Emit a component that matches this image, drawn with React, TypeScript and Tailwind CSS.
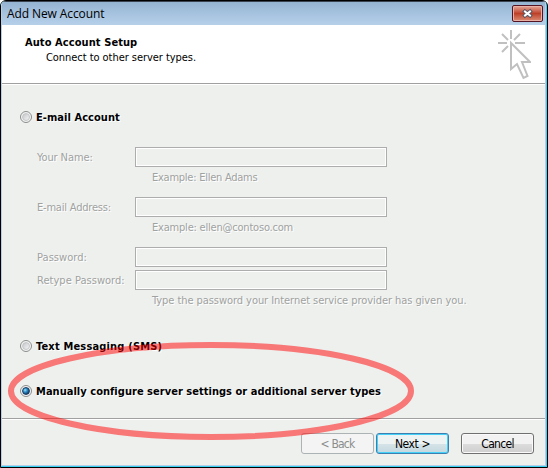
import type { ReactNode } from "react";

const Radio = ({ checked = false }: { checked?: boolean }) => (
  <span className="flex size-3 shrink-0 items-center justify-center rounded-full border border-[#8b8d8d] bg-[#f4f4f4]">
    <span
      className={
        checked
          ? "size-2 rounded-full border border-[#193c60] bg-[radial-gradient(circle_at_35%_35%,#9ee4fb_0%,#2f8fc9_35%,#0b3765_80%)]"
          : "size-2 rounded-full border border-[#c3c6c8] bg-linear-to-br from-[#c5c8ca] to-[#f4f4f4]"
      }
    />
  </span>
);

const Option = ({ label, spacing, checked }: { label: string; spacing: string; checked?: boolean }) => (
  <label className="flex h-4 items-center gap-1 pl-[18px]">
    <Radio checked={checked} />
    <span className={`pt-0.5 font-bold text-black ${spacing}`}>{label}</span>
  </label>
);

const Field = ({ label, spacing }: { label: string; spacing: string }) => (
  <div className="flex h-5 items-center pl-[35px]">
    <span className={`w-[98px] pt-0.5 ${spacing}`}>{label}</span>
    <span className="h-5 w-[252px] border border-[#acadac] bg-[#eef0ee] shadow-[inset_0_0_0_1px_#fff]" />
  </div>
);

const Hint = ({ children, spacing }: { children: ReactNode; spacing: string }) => (
  <p className={`h-5 pl-[150px] leading-[22px] ${spacing}`}>{children}</p>
);

export default function App() {
  return (
    <div className="bg-white">
      <div className="relative h-[468px] w-[548px] overflow-hidden rounded-t-[6px] border border-black bg-[#37d0f2] pr-px pb-px font-['DejaVu_Sans_Condensed','DejaVu_Sans',sans-serif] text-[11px] whitespace-nowrap">
        <div className="flex h-full flex-col border-x border-b border-[#b5cfe9] bg-[#eef0ee]">
          <header className="flex h-6 shrink-0 items-center justify-between border-t border-[#3b4350] bg-linear-to-b from-[#95b4d2] to-[#b6d0ea] pr-[2px] pl-[5px]">
            <h1 className="font-['Open_Sans','Noto_Sans',sans-serif] text-[12px] tracking-[-0.1px] text-black">
              Add New Account
            </h1>
            <button className="mb-px flex h-[17px] w-[31px] items-center justify-center rounded-[2px] border border-[#541423] bg-linear-to-b from-[#e4a69a] via-[#bd3f28] via-50% to-[#d98b72] shadow-[inset_0_0_0_1px_#e9b0a5]">
              <svg width="13" height="11" viewBox="0 0 13 11">
                <path d="M4 3.500 9 7.500M9 3.500l-5 4" stroke="#565665" strokeWidth="4" strokeLinecap="square" />
                <path d="M4 3.500 9 7.500M9 3.500l-5 4" stroke="#fff" strokeWidth="2" strokeLinecap="square" />
              </svg>
            </button>
          </header>

          <section className="flex h-[59px] shrink-0 justify-between border-b border-[#a0a0a0] bg-white text-black">
            <div className="pt-[10px] pl-[23px]">
              <h2 className="h-[15px] leading-[15px] font-bold tracking-[0.08px]">Auto Account Setup</h2>
              <p className="h-[15px] pl-[21px] leading-[15px] tracking-[-0.05px]">Connect to other server types.</p>
            </div>
            <svg className="mt-1 mr-[14px]" width="34" height="52" viewBox="497 29 34 52" fill="none" stroke="#c0c0c0" strokeWidth="2">
              <path d="M511 30v9M498 43h9M515 43h10M502 34l6 6M520 34l-6 6M502 52l6-6" />
              <path d="M511 43v26l6-5 6.500 14 4-2-5.500-14h8z" />
            </svg>
          </section>

          <main className="h-[335px] shrink-0 border-t border-b border-t-white border-b-[#a0a0a0] pt-[24px] text-[#a0a2a0] [text-shadow:1px_1px_0_#fff]">
            <Option label="E-mail Account" spacing="tracking-[0.05px]" />
            <div className="h-[22px]" />
            <Field label="Your Name:" spacing="tracking-[-0.1px]" />
            <Hint spacing="tracking-[-0.25px]">Example: Ellen Adams</Hint>
            <div className="h-[10px]" />
            <Field label="E-mail Address:" spacing="tracking-[-0.2px]" />
            <Hint spacing="tracking-[-0.2px]">Example: ellen@contoso.com</Hint>
            <div className="h-[10px]" />
            <Field label="Password:" spacing="tracking-[0.05px]" />
            <div className="h-[3px]" />
            <Field label="Retype Password:" spacing="tracking-[0.03px]" />
            <Hint spacing="tracking-[-0.06px]">Type the password your Internet service provider has given you.</Hint>
            <div className="h-[28px]" />
            <Option label="Text Messaging (SMS)" spacing="tracking-[0.17px]" />
            <div className="h-[29px]" />
            <Option label="Manually configure server settings or additional server types" spacing="tracking-[0.03px]" checked />
          </main>

          <footer className="flex flex-1 items-start justify-end border-t border-white pt-[13px] pr-[11px] text-[12px] text-black">
            <button className="h-[21px] w-[73px] rounded-[3px] border border-[#adb2b5] bg-[#f4f4f4] tracking-[-0.8px] text-[#8b8d8b]">
              &lt; Back
            </button>
            <button className="ml-[2px] h-[21px] w-[73px] rounded-[3px] border border-[#3c7fb1] bg-linear-to-b from-[#edf2f3] from-50% via-[#d6e4e8] via-50% to-[#c4d8df] tracking-[-0.4px] shadow-[inset_0_0_0_1px_#45d0f7]">
              Next &gt;
            </button>
            <button className="ml-3 h-[21px] w-[73px] rounded-[3px] border border-[#707070] bg-linear-to-b from-[#f2f2f2] from-50% via-[#dddddd] via-50% to-[#cfcfcf] tracking-[-0.7px] shadow-[inset_0_0_0_1px_#fafafa]">
              Cancel
            </button>
          </footer>
        </div>

        {/* hand-drawn highlight around the selected option */}
        <svg className="pointer-events-none absolute top-[330px] left-0" width="430" height="120" viewBox="1 331 430 120" fill="none">
          <ellipse cx="211" cy="391" rx="200" ry="46" stroke="#ff0000" strokeOpacity="0.5" strokeWidth="6" />
        </svg>
      </div>
    </div>
  );
}
